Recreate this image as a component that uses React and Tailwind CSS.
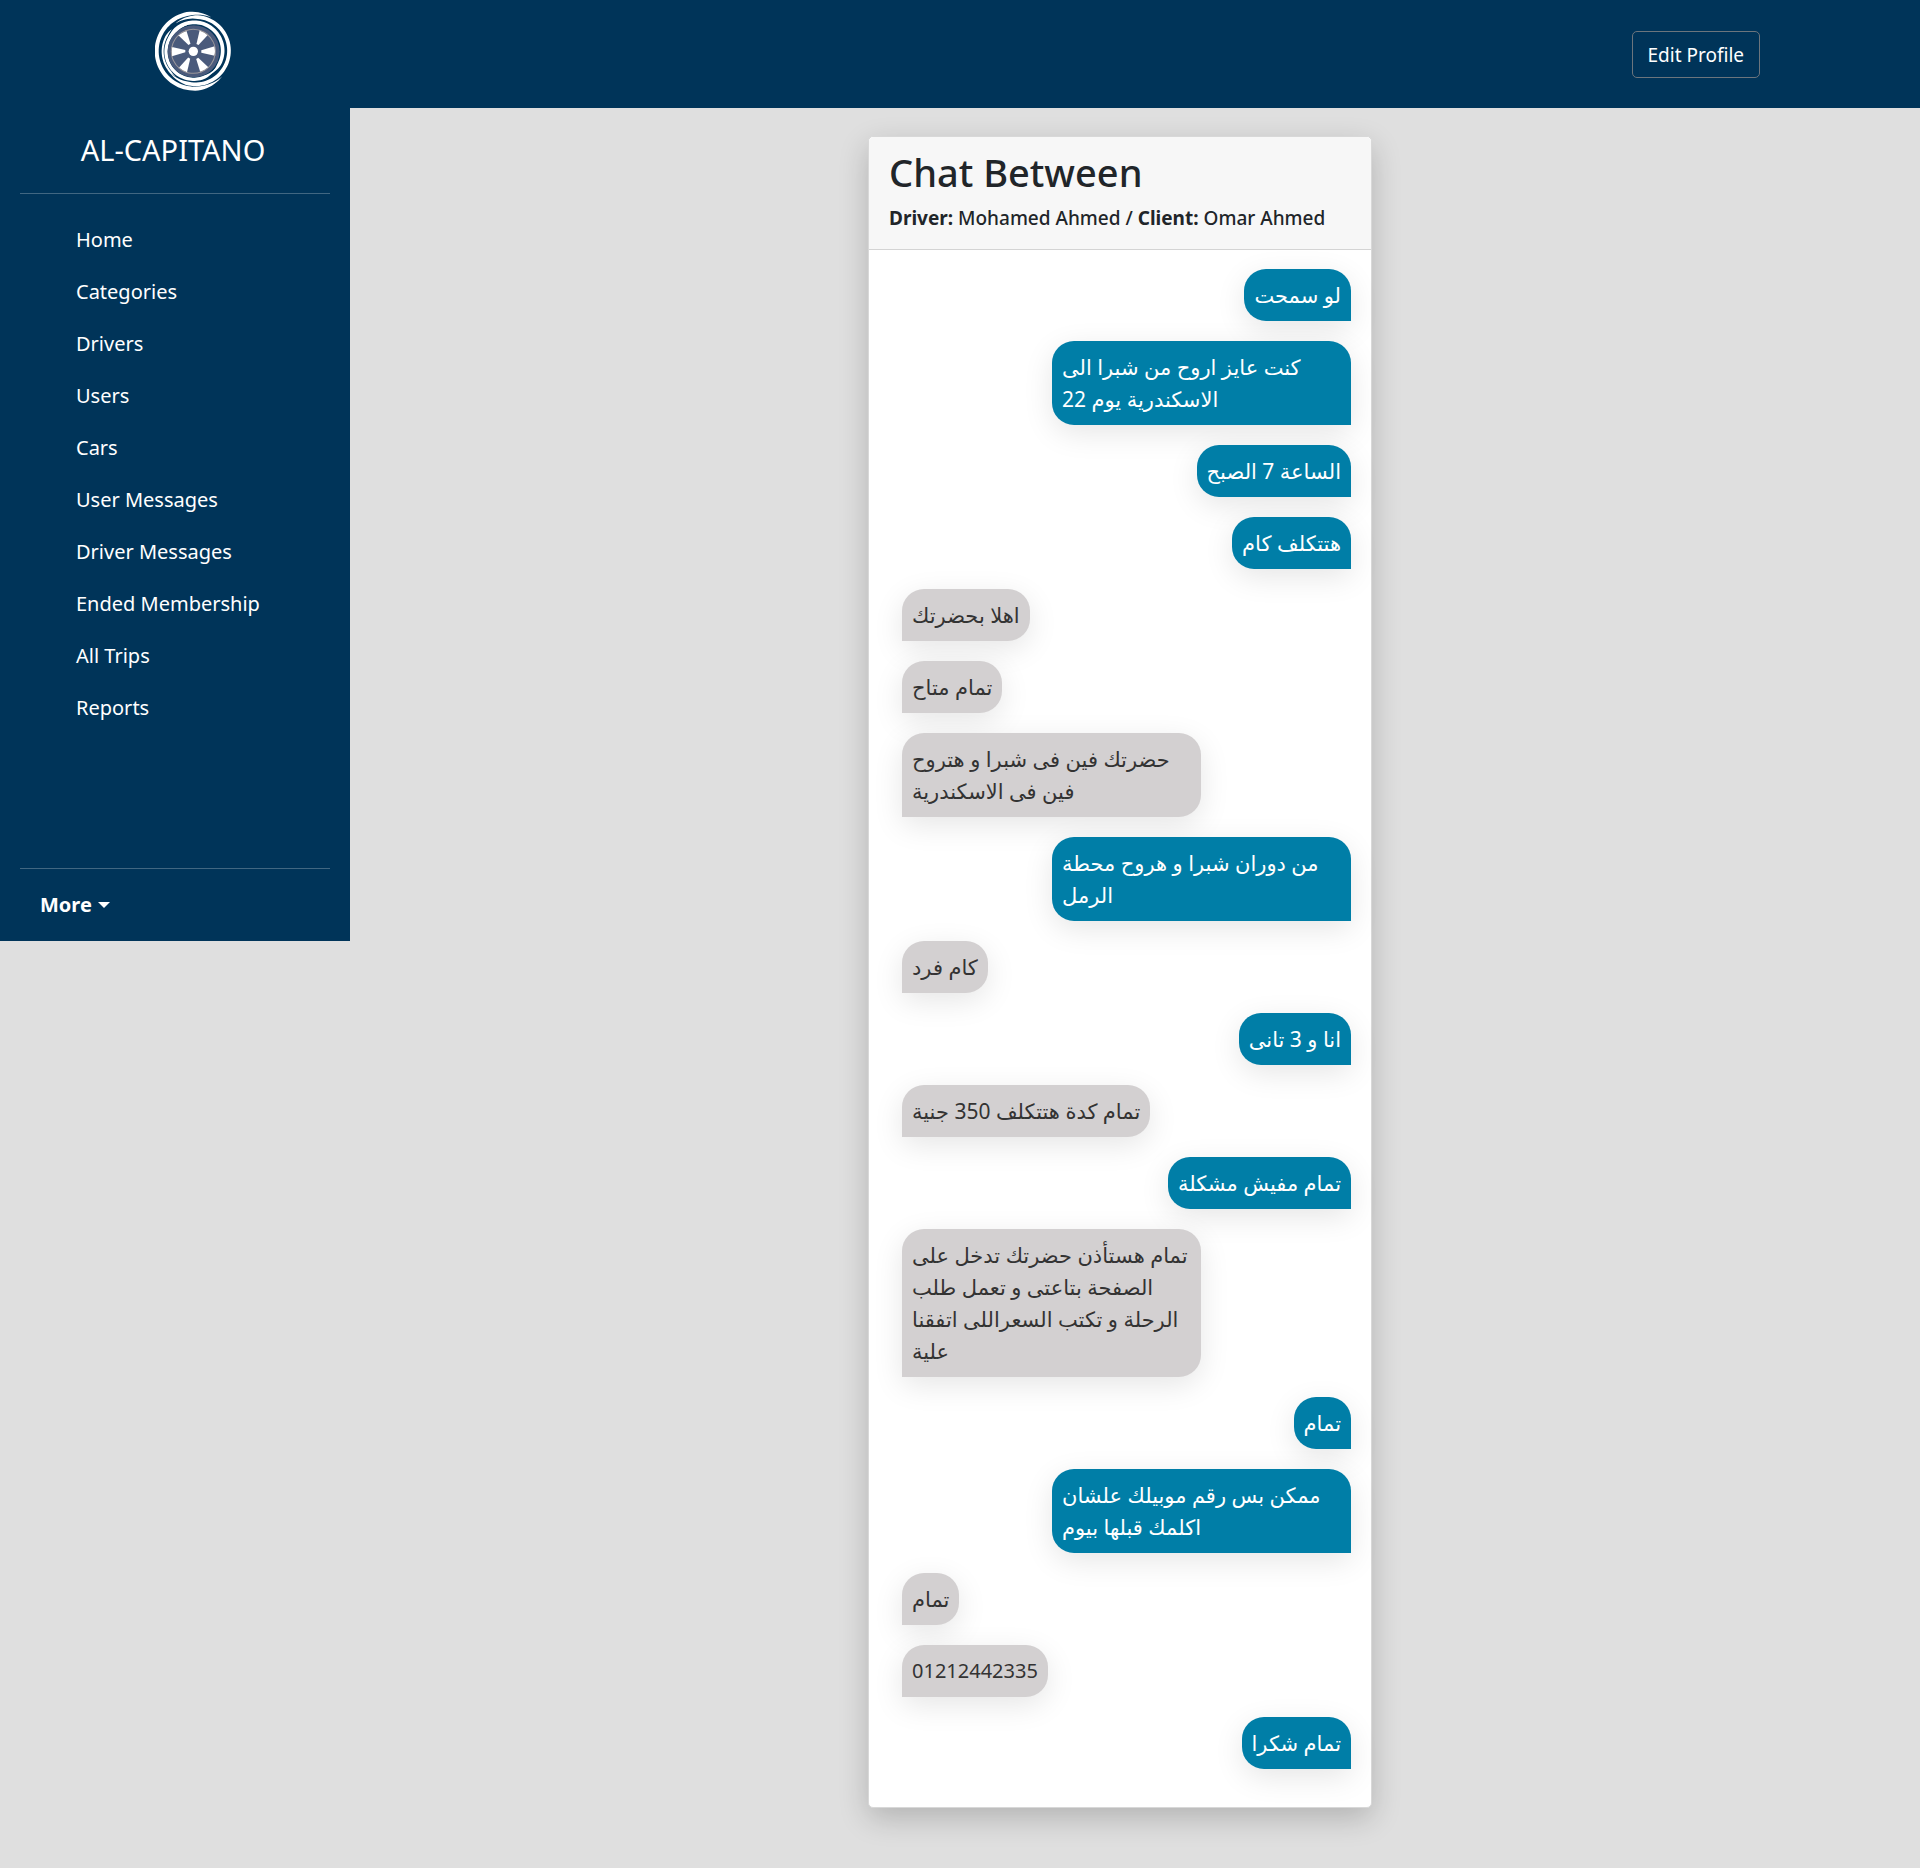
const navItems = [
  'Home',
  'Categories',
  'Drivers',
  'Users',
  'Cars',
  'User Messages',
  'Driver Messages',
  'Ended Membership',
  'All Trips',
  'Reports',
];

const messages = [
  { from: 'client', text: 'لو سمحت' },
  { from: 'client', text: 'كنت عايز اروح من شبرا الى\nالاسكندرية يوم 22' },
  { from: 'client', text: 'الساعة 7 الصبح' },
  { from: 'client', text: 'هتتكلف كام' },
  { from: 'driver', text: 'اهلا بحضرتك' },
  { from: 'driver', text: 'تمام متاح' },
  { from: 'driver', text: 'حضرتك فين فى شبرا و هتروح\nفين فى الاسكندرية' },
  { from: 'client', text: 'من دوران شبرا و هروح محطة\nالرمل' },
  { from: 'driver', text: 'كام فرد' },
  { from: 'client', text: 'انا و 3 تانى' },
  { from: 'driver', text: 'تمام كدة هتتكلف 350 جنية' },
  { from: 'client', text: 'تمام مفيش مشكلة' },
  {
    from: 'driver',
    text: 'تمام هستأذن حضرتك تدخل على\nالصفحة بتاعتى و تعمل طلب\nالرحلة و تكتب السعراللى اتفقنا\nعلية',
  },
  { from: 'client', text: 'تمام' },
  { from: 'client', text: 'ممكن بس رقم موبيلك علشان\nاكلمك قبلها بيوم' },
  { from: 'driver', text: 'تمام' },
  { from: 'driver', text: '01212442335' },
  { from: 'client', text: 'تمام شكرا' },
];

// An arc whose stroke narrows to a point over the last part of each end.
function taperedArc(cx, cy, r, from, to, width) {
  const outer = [];
  const inner = [];
  const steps = 60;
  for (let i = 0; i <= steps; i += 1) {
    const t = i / steps;
    const angle = ((from + (to - from) * t) * Math.PI) / 180;
    const half = (width / 2) * Math.min(1, t * 7, (1 - t) * 7);
    const point = (radius) =>
      `${(cx + radius * Math.cos(angle)).toFixed(1)} ${(cy + radius * Math.sin(angle)).toFixed(1)}`;
    outer.push(point(r + half));
    inner.unshift(point(r - half));
  }
  return `M${[...outer, ...inner].join('L')}Z`;
}

const tireArcs = [
  taperedArc(583, 153, 113, 42, 297, 12),
  taperedArc(586, 152, 101, -126, 142, 11),
  taperedArc(583, 152, 85, -165, 60, 11),
  taperedArc(581, 155, 83, 35, 262, 10),
  taperedArc(582, 154, 94, 125, 225, 6),
];

function WheelLogo() {
  const angles = [0, 60, 120, 180, 240, 300];
  return (
    <svg viewBox="465 33 228 240" className="h-20 w-[76px]" role="img" aria-label="Al-Capitano">
      {tireArcs.map((d) => (
        <path key={d} d={d} fill="#fff" />
      ))}
      <circle cx="581" cy="154" r="78" fill="#4a5a7b" />
      <g transform="translate(580 154)">
        {angles.map((a) => (
          <g key={a} transform={`rotate(${a})`}>
            <path d="M24 -3L64 -15A66 66 0 0 1 64 13L24 4Z" fill="#fff" />
            <path d="M65 -13A66 66 0 0 1 65 13" fill="none" stroke="#9b979b" strokeWidth="3" />
            <path
              d="M49.6 43.4A66 66 0 0 1 38 54M64 16A66 66 0 0 1 49.6 43.4"
              transform="rotate(-6)"
              fill="none"
              stroke="#9b979b"
              strokeWidth="3"
            />
          </g>
        ))}
        <circle r="14" fill="#fff" />
      </g>
    </svg>
  );
}

function Header() {
  return (
    <header className="flex h-27 items-start justify-between bg-[#003459] pr-40 pl-[155px]">
      <a href="#" className="mt-[11px]">
        <WheelLogo />
      </a>
      <button
        type="button"
        className="mt-[31px] h-[47px] rounded-[5px] border border-[#6c757d] px-[15px] text-[19px] leading-7 text-white"
      >
        Edit Profile
      </button>
    </header>
  );
}

function Sidebar() {
  return (
    <aside className="flex h-[833px] w-[350px] shrink-0 flex-col bg-[#003459] px-5 text-white">
      <h1 className="pt-[22px] pr-1 text-center text-[29px] leading-10">AL-CAPITANO</h1>
      <hr className="mt-[23px] border-[#416782]" />
      <nav className="mt-5">
        <ul>
          {navItems.map((item) => (
            <li key={item}>
              <a href="#" className="block h-13 pl-14 text-xl leading-[52px]">
                {item}
              </a>
            </li>
          ))}
        </ul>
      </nav>
      <hr className="mt-auto border-[#416782]" />
      <button type="button" className="flex h-[72px] items-center gap-[6px] pl-5 text-xl font-bold">
        More
        <svg viewBox="0 0 12 6" className="h-[6px] w-3" fill="currentColor" aria-hidden="true">
          <path d="M0 0H12L6 6Z" />
        </svg>
      </button>
    </aside>
  );
}

function Message({ from, text }) {
  const look =
    from === 'client'
      ? 'self-end rounded-br-none bg-[#007ea7] text-white'
      : 'ml-[13px] self-start rounded-bl-none bg-[#d3d0d1] text-[#333]';
  const width = text.includes('\n') ? 'w-[299px]' : '';
  const size = /^\d+$/.test(text) ? 'text-xl' : 'text-[21px]';
  return (
    <li
      className={`rounded-[22px] p-[10px] whitespace-pre shadow-[0_8px_30px_rgba(0,0,0,0.1)] ${look} ${width}`}
    >
      <p className={`leading-8 ${size}`}>{text}</p>
    </li>
  );
}

export default function App() {
  return (
    <div
      className="min-h-screen bg-[#dfdfdf] text-[#212529]"
      style={{ fontFamily: '"Noto Sans", "DejaVu Sans", sans-serif' }}
    >
      <Header />
      <div className="flex items-start">
        <Sidebar />
        <main className="flex grow justify-center pt-7 pr-[30px] pb-15">
          <section className="w-[504px] rounded-[5px] border border-[#d8d8d8] bg-white shadow-[0_10px_30px_rgba(0,0,0,0.2)]">
            <header className="rounded-t-[5px] border-b border-[#d4d4d4] bg-[#f7f7f7] px-5 pt-[11px] pb-4">
              <h2 className="text-[38px] leading-12 font-medium">Chat Between</h2>
              <p className="mt-[7px] text-[19px] leading-[30px] font-medium whitespace-nowrap">
                <strong>Driver:</strong> Mohamed Ahmed / <strong>Client:</strong> Omar Ahmed
              </p>
            </header>
            <ul className="flex flex-col gap-5 px-5 pt-[19px] pb-[38px]">
              {messages.map((message, index) => (
                <Message key={index} {...message} />
              ))}
            </ul>
          </section>
        </main>
      </div>
    </div>
  );
}
